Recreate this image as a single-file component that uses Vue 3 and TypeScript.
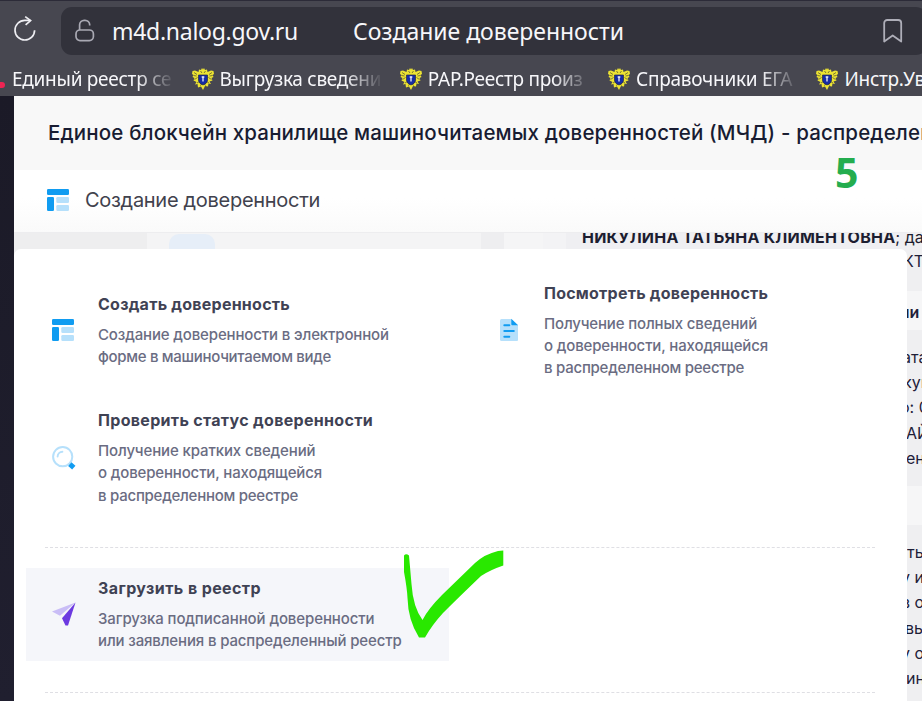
<script setup lang="ts">
interface Line { text: string; track: number }
interface MenuItem { icon: 'layout' | 'doc' | 'search' | 'send'; title: Line; lines: Line[]; active?: boolean }

const bookmarks: { text: string; fade: boolean }[] = [
  { text: 'Выгрузка сведени', fade: true },
  { text: 'РАР.Реестр произ', fade: true },
  { text: 'Справочники ЕГА', fade: true },
  { text: 'Инстр.Ув', fade: false },
]

const items: MenuItem[] = [
  {
    icon: 'layout',
    title: { text: 'Создать доверенность', track: 0.24 },
    lines: [
      { text: 'Создание доверенности в электронной', track: -0.14 },
      { text: 'форме в машиночитаемом виде', track: -0.3 },
    ],
  },
  {
    icon: 'doc',
    title: { text: 'Посмотреть доверенность', track: 0.22 },
    lines: [
      { text: 'Получение полных сведений', track: -0.15 },
      { text: 'о доверенности, находящейся', track: -0.15 },
      { text: 'в распределенном реестре', track: -0.25 },
    ],
  },
  {
    icon: 'search',
    title: { text: 'Проверить статус доверенности', track: 0.31 },
    lines: [
      { text: 'Получение кратких сведений', track: -0.12 },
      { text: 'о доверенности, находящейся', track: -0.15 },
      { text: 'в распределенном реестре', track: -0.25 },
    ],
  },
]

const upload: MenuItem = {
  icon: 'send',
  active: true,
  title: { text: 'Загрузить в реестр', track: 0.4 },
  lines: [
    { text: 'Загрузка подписанной доверенности', track: -0.1 },
    { text: 'или заявления в распределенный реестр', track: -0.14 },
  ],
}

const groups: MenuItem[][] = [items, [upload]]

/* Document rows; shift aligns each row's visible tail along the menu edge */
const blocks: { kind: string; rows: { text: string; shift: number }[] }[] = [
  { kind: 'first', rows: [{ text: 'КТ', shift: -4 }] },
  { kind: 'caption', rows: [{ text: 'ли', shift: -7 }] },
  {
    kind: 'body',
    rows: [
      { text: 'ата', shift: -5 },
      { text: 'кум', shift: -4 },
      { text: 'о: 0', shift: -7 },
      { text: 'АЙ', shift: -1 },
      { text: 'ен', shift: -1 },
    ],
  },
  { kind: 'caption', rows: [] },
  {
    kind: 'body',
    rows: [
      { text: 'ть', shift: 0 },
      { text: 'у и', shift: -6 },
      { text: 'в о', shift: -6 },
      { text: 'вы', shift: -2 },
      { text: 'у о', shift: -6 },
      { text: 'ин', shift: -1 },
    ],
  },
]
</script>

<template>
  <div class="window">
    <header class="chrome">
      <div class="toolbar">
        <svg class="reload" width="24" height="28" viewBox="0 0 24 28" fill="none" stroke="#eeeef2" stroke-width="1.7">
          <path d="M21.6 15.2A9.8 9.8 0 1 1 11.800 5.400h5.500" />
          <path d="M12.2 1.600 17.600 5.600l-5 4.300" />
        </svg>
        <div class="address">
          <svg class="lock" width="20" height="24" viewBox="0 0 20 24" fill="none" stroke="#a9a9b3" stroke-width="1.7">
            <rect x="1" y="11" width="17.4" height="10.6" rx="4" />
            <path d="M4.6 11V5.8A4.6 4.6 0 0 1 9.2 1.3h.9a4.6 4.6 0 0 1 4.6 4.5v.6" />
          </svg>
          <span class="host">m4d.nalog.gov.ru</span>
          <span class="tab-title">Создание доверенности</span>
          <svg class="flag" width="20" height="24" viewBox="0 0 20 24" fill="none" stroke="#aeaeb8" stroke-width="1.8">
            <path d="M1.2 22.500V4a3 3 0 0 1 3-3h11a3 3 0 0 1 3 3v18.500l-8.5-6z" stroke-linejoin="round" />
          </svg>
        </div>
      </div>
      <nav class="bookmarks">
        <div class="bookmark lead"><i class="dot"></i><span class="label fade">Единый реестр се</span></div>
        <div v-for="b in bookmarks" :key="b.text" class="bookmark">
          <svg width="24" height="22" viewBox="0 0 24 22">
            <path d="M1.500 3 4 2.500 7.500 4 8 1.500l2 .5 1-2 1 1.500 1-1.500 1 2 2-.5.500 2.500L20 2.500l2.500.5.500 3-1.500 1 1 2-2 1 1 2.500-3 1 1.500 2.500-2.500-.5-.5 3-3-.5L12 22l-2-3.500-3 1-.5-3.500-2.500.5L5.500 14l-3-1.500 1-2.500-2-1 1-2L1 6z" fill="#ece333" />
            <path d="m3 4.500 3 2m-3.500 1 3 .500m-2 3.500 3-2M21 4.500l-3 2m3.500 1-3 .500m2 3.500-3-2M9.500 3l1.500 2m3.500-2L13 5M6 15l2.500-1.500m9.500 1.500-2.500-1.500m-6.500 4 2-1.500m4 1.500-2-1.500" stroke="#6f6c30" stroke-width=".9" fill="none" />
            <path d="M7.500 7h9v5.500q-.5 3-4.500 4.500-4-1.500-4.500-4.500z" fill="#162ca5" stroke="#222747" stroke-width=".7" />
            <path d="M10.700 9h2.600m-1.300 0v4.500" stroke="#f0f2f7" stroke-width="1.300" />
          </svg>
          <span class="label" :class="{ fade: b.fade }">{{ b.text }}</span>
        </div>
      </nav>
    </header>

    <div class="page">
      <aside class="rail"></aside>
      <main class="main">
        <div class="banner">Единое блокчейн хранилище машиночитаемых доверенностей (МЧД) - распределенный</div>
        <div class="heading">
          <svg width="22" height="22" viewBox="0 0 22 22">
            <rect width="22" height="6" rx="1.300" fill="#109cf1" />
            <rect y="8" width="7" height="14" rx="1.300" fill="#109cf1" />
            <rect x="9.300" y="8" width="12.700" height="6" rx="1.300" fill="#b6e0fb" />
            <rect x="9.300" y="16" width="12.700" height="6" rx="1.300" fill="#b6e0fb" />
          </svg>
          <h1>Создание доверенности</h1>
        </div>

        <div class="content">
          <div class="strip">
            <div class="s1"></div>
            <div class="s2"><i></i></div>
            <div class="s3"></div>
            <div class="s4"></div>
            <div class="s5"></div>
            <div class="person"><span><b>НИКУЛИНА ТАТЬЯНА КЛИМЕНТОВНА</b>; да</span></div>
          </div>
          <div class="document">
            <section v-for="(b, i) in blocks" :key="i" class="block" :class="b.kind">
              <p v-for="r in b.rows" :key="r.text" :style="{ textIndent: r.shift + 'px' }">{{ r.text }}</p>
            </section>
          </div>

          <div class="menu">
            <div v-for="(g, gi) in groups" :key="gi" class="group">
              <a v-for="m in g" :key="m.title.text" class="item" :class="{ active: m.active }">
                <svg v-if="m.icon === 'layout'" width="24" height="24" viewBox="0 0 24 24">
                  <rect y="1" width="22" height="6" rx="1.300" fill="#109cf1" />
                  <rect y="9" width="7" height="14" rx="1.300" fill="#109cf1" />
                  <rect x="9.300" y="9" width="12.700" height="6" rx="1.300" fill="#b6e0fb" />
                  <rect x="9.300" y="17" width="12.700" height="6" rx="1.300" fill="#b6e0fb" />
                </svg>
                <svg v-else-if="m.icon === 'doc'" width="24" height="24" viewBox="0 0 24 24">
                  <path d="M4 1h9l7 6v15a1 1 0 0 1-1 1H3.500A1.500 1.500 0 0 1 2 21.500v-19A1.500 1.500 0 0 1 3.500 1z" fill="#b6e0fb" />
                  <path d="M13.300.7 20 7.300h-5.700a1 1 0 0 1-1-1z" fill="#109cf1" />
                  <path d="M6.300 7.200h5M6.300 13h9.500M6.300 18.700h5" stroke="#109cf1" stroke-width="2" stroke-linecap="round" />
                </svg>
                <svg v-else-if="m.icon === 'search'" width="24" height="24" viewBox="0 0 24 24">
                  <circle cx="10.700" cy="10.700" r="9.600" fill="#fff" stroke="#b6e0fb" stroke-width="2" />
                  <path d="M5.600 10.500a5 5 0 0 1 4.800-4.800" stroke="#b6e0fb" stroke-width="1.900" fill="none" stroke-linecap="round" />
                  <path d="m17.800 18.200 4 3.500" stroke="#109cf1" stroke-width="5" />
                </svg>
                <svg v-else width="24" height="24" viewBox="0 0 24 24">
                  <path d="M0 9.500 23.500.5 8 13.800z" fill="#c9bdf6" />
                  <path d="M23.500.5 16 23.500h-2.500L10 16.200z" fill="#6c39e0" />
                </svg>
                <div class="text">
                  <strong :style="{ letterSpacing: m.title.track + 'px' }">{{ m.title.text }}</strong>
                  <span v-for="l in m.lines" :key="l.text" :style="{ letterSpacing: l.track + 'px' }">{{ l.text }}</span>
                </div>
              </a>
            </div>
          </div>
        </div>
      </main>
    </div>

    <div class="step">5</div>
    <svg class="check" width="102" height="90" viewBox="0 0 102 90">
      <path d="M1 5.500Q3 3 6 5.500L8.500 34Q10 57 19.500 70Q25 59 39 45L72 13Q82 4 95 1L100.300 .5V15.500Q87 20 78 26Q56 47 40 63Q29 75 22 87.500H16Q5 70 4.500 48Q4 38 1 22z" fill="#29e800" />
    </svg>
  </div>
</template>

<style>
body { margin: 0; }
</style>

<style scoped>
.window {
  position: relative;
  display: flex;
  flex-direction: column;
  width: 922px;
  height: 701px;
  overflow: hidden;
  font-family: Inter, "Liberation Sans", sans-serif;
  white-space: nowrap;
  background: #fff;
}
.chrome {
  flex: none;
  height: 95px;
  border-top: 1px solid #2c2b38;
  background: #474750;
  font-family: "Noto Sans", "Open Sans", sans-serif;
  color: #f7f7fa;
}
.toolbar { display: flex; height: 60px; }
.reload { flex: none; margin: 14px 24px 0 13px; }
.address {
  display: flex;
  flex: none;
  box-sizing: border-box;
  align-items: center;
  width: 866px;
  height: 48px;
  margin-top: 6px;
  padding: 0 0 0 13px;
  border-radius: 11px;
  background: #32323b;
  font-size: 23px;
  line-height: 48px;
}
.lock { flex: none; margin: 0 17px 1px 1px; }
.host { width: 241px; letter-spacing: -.28px; }
.tab-title { width: 530px; letter-spacing: -.03px; }
.flag { flex: none; margin-bottom: 1px; }
.bookmarks { display: flex; height: 36px; font-size: 19px; line-height: 36px; }
.bookmark { display: flex; flex: none; align-items: center; width: 208.3px; }
.bookmark svg { flex: none; margin: 0 5px 1px -1px; }
.bookmark.lead { width: 191.500px; }
.dot { flex: none; width: 10px; height: 6px; margin: 12px 7px 0 -5px; border-radius: 3px; background: #ef2453; }
.label { letter-spacing: -.27px; }
.fade {
  width: 160px;
  mask-image: linear-gradient(to right, #000 78%, transparent 102%);
}
.page { display: flex; flex: 1; min-height: 0; }
.rail { flex: none; width: 14px; background: linear-gradient(#1b1a27, #201f2f); }
.main { display: flex; flex: 1; flex-direction: column; min-width: 0; }
.banner {
  flex: none;
  height: 74px;
  padding-left: 34px;
  overflow: hidden;
  background: #f8f8f8;
  font-size: 20.5px;
  font-weight: 500;
  line-height: 74px;
  letter-spacing: .155px;
  color: #181c32;
}
.heading {
  display: flex;
  flex: none;
  box-sizing: border-box;
  align-items: center;
  height: 63px;
  padding: 0 0 3px 33px;
  border-bottom: 1px solid #ededef;
  background: linear-gradient(#fff 45%, #fafafa);
}
.heading h1 {
  margin: 0 0 0 16px;
  font-size: 20px;
  font-weight: 400;
  letter-spacing: -.29px;
  color: #41424d;
}
.content { position: relative; flex: 1; min-height: 0; }
.strip { display: flex; height: 16px; overflow: hidden; background: #efeff0; }
.strip > div { flex: none; }
.s1 { width: 133px; background: #eeeeef; }
.s2 { width: 334px; background: #f4f4f5; }
.s2 i { display: block; width: 46px; height: 40px; margin: 1px 0 0 22px; border-radius: 10px; background: #e6eef8; }
.s3 { width: 23px; background: #eeeef0; }
.s4 { width: 39px; background: #f5f5f6; }
.s5 { width: 23px; background: #f3f3f5; }
.strip .person {
  flex: 1;
  min-width: 0;
  padding-left: 16px;
  font-size: 16px;
  line-height: 8px;
  color: #1c1d30;
  background: #efeff2;
}
.person b { letter-spacing: .22px; }
.document { height: 452px; padding-left: 893px; font-size: 16px; line-height: 25.200px; color: #1e2038; background: #efeff1; }
.block { box-sizing: border-box; overflow: hidden; }
.block p { margin: 0; }
.first { height: 42px; }
.caption { height: 39px; padding-top: 9px; background: #f6f6f7; font-weight: 600; }
.body { height: 156px; padding-top: 15px; }
.body:last-child { height: 176px; }
.menu {
  position: absolute;
  top: 16px;
  left: 0;
  box-sizing: border-box;
  width: 893px;
  height: 460px;
  padding: 24px 12px 0;
  border-radius: 7px;
  background: #fff;
}
.group {
  position: relative;
  display: grid;
  grid-template-columns: 423px 423px;
  grid-auto-rows: minmax(93px, auto);
  column-gap: 23px;
  row-gap: 12.300px;
  padding-bottom: 31.500px;
  margin-bottom: 21px;
}
.group::after {
  content: "";
  position: absolute;
  right: 20px;
  bottom: -1px;
  left: 19px;
  border-bottom: 1px dashed #dfdfe4;
}
.item { display: flex; box-sizing: border-box; align-items: center; padding: 8px 0 8.500px 26px; }
.item svg { flex: none; margin-right: 22px; }
.active { background: #f5f6fa; }
.text { display: flex; flex-direction: column; }
.text strong { margin-bottom: 7.700px; font-size: 16px; font-weight: 700; line-height: 24px; color: #3f4254; }
.text span { font-size: 15px; font-weight: 500; line-height: 22.300px; color: #6a6c82; }
.step {
  position: absolute;
  top: 145px;
  left: 835px;
  font: 700 41px/54px "Open Sans", "Noto Sans", sans-serif;
  color: #24ad4e;
}
.check { position: absolute; top: 550px; left: 403px; }
</style>
